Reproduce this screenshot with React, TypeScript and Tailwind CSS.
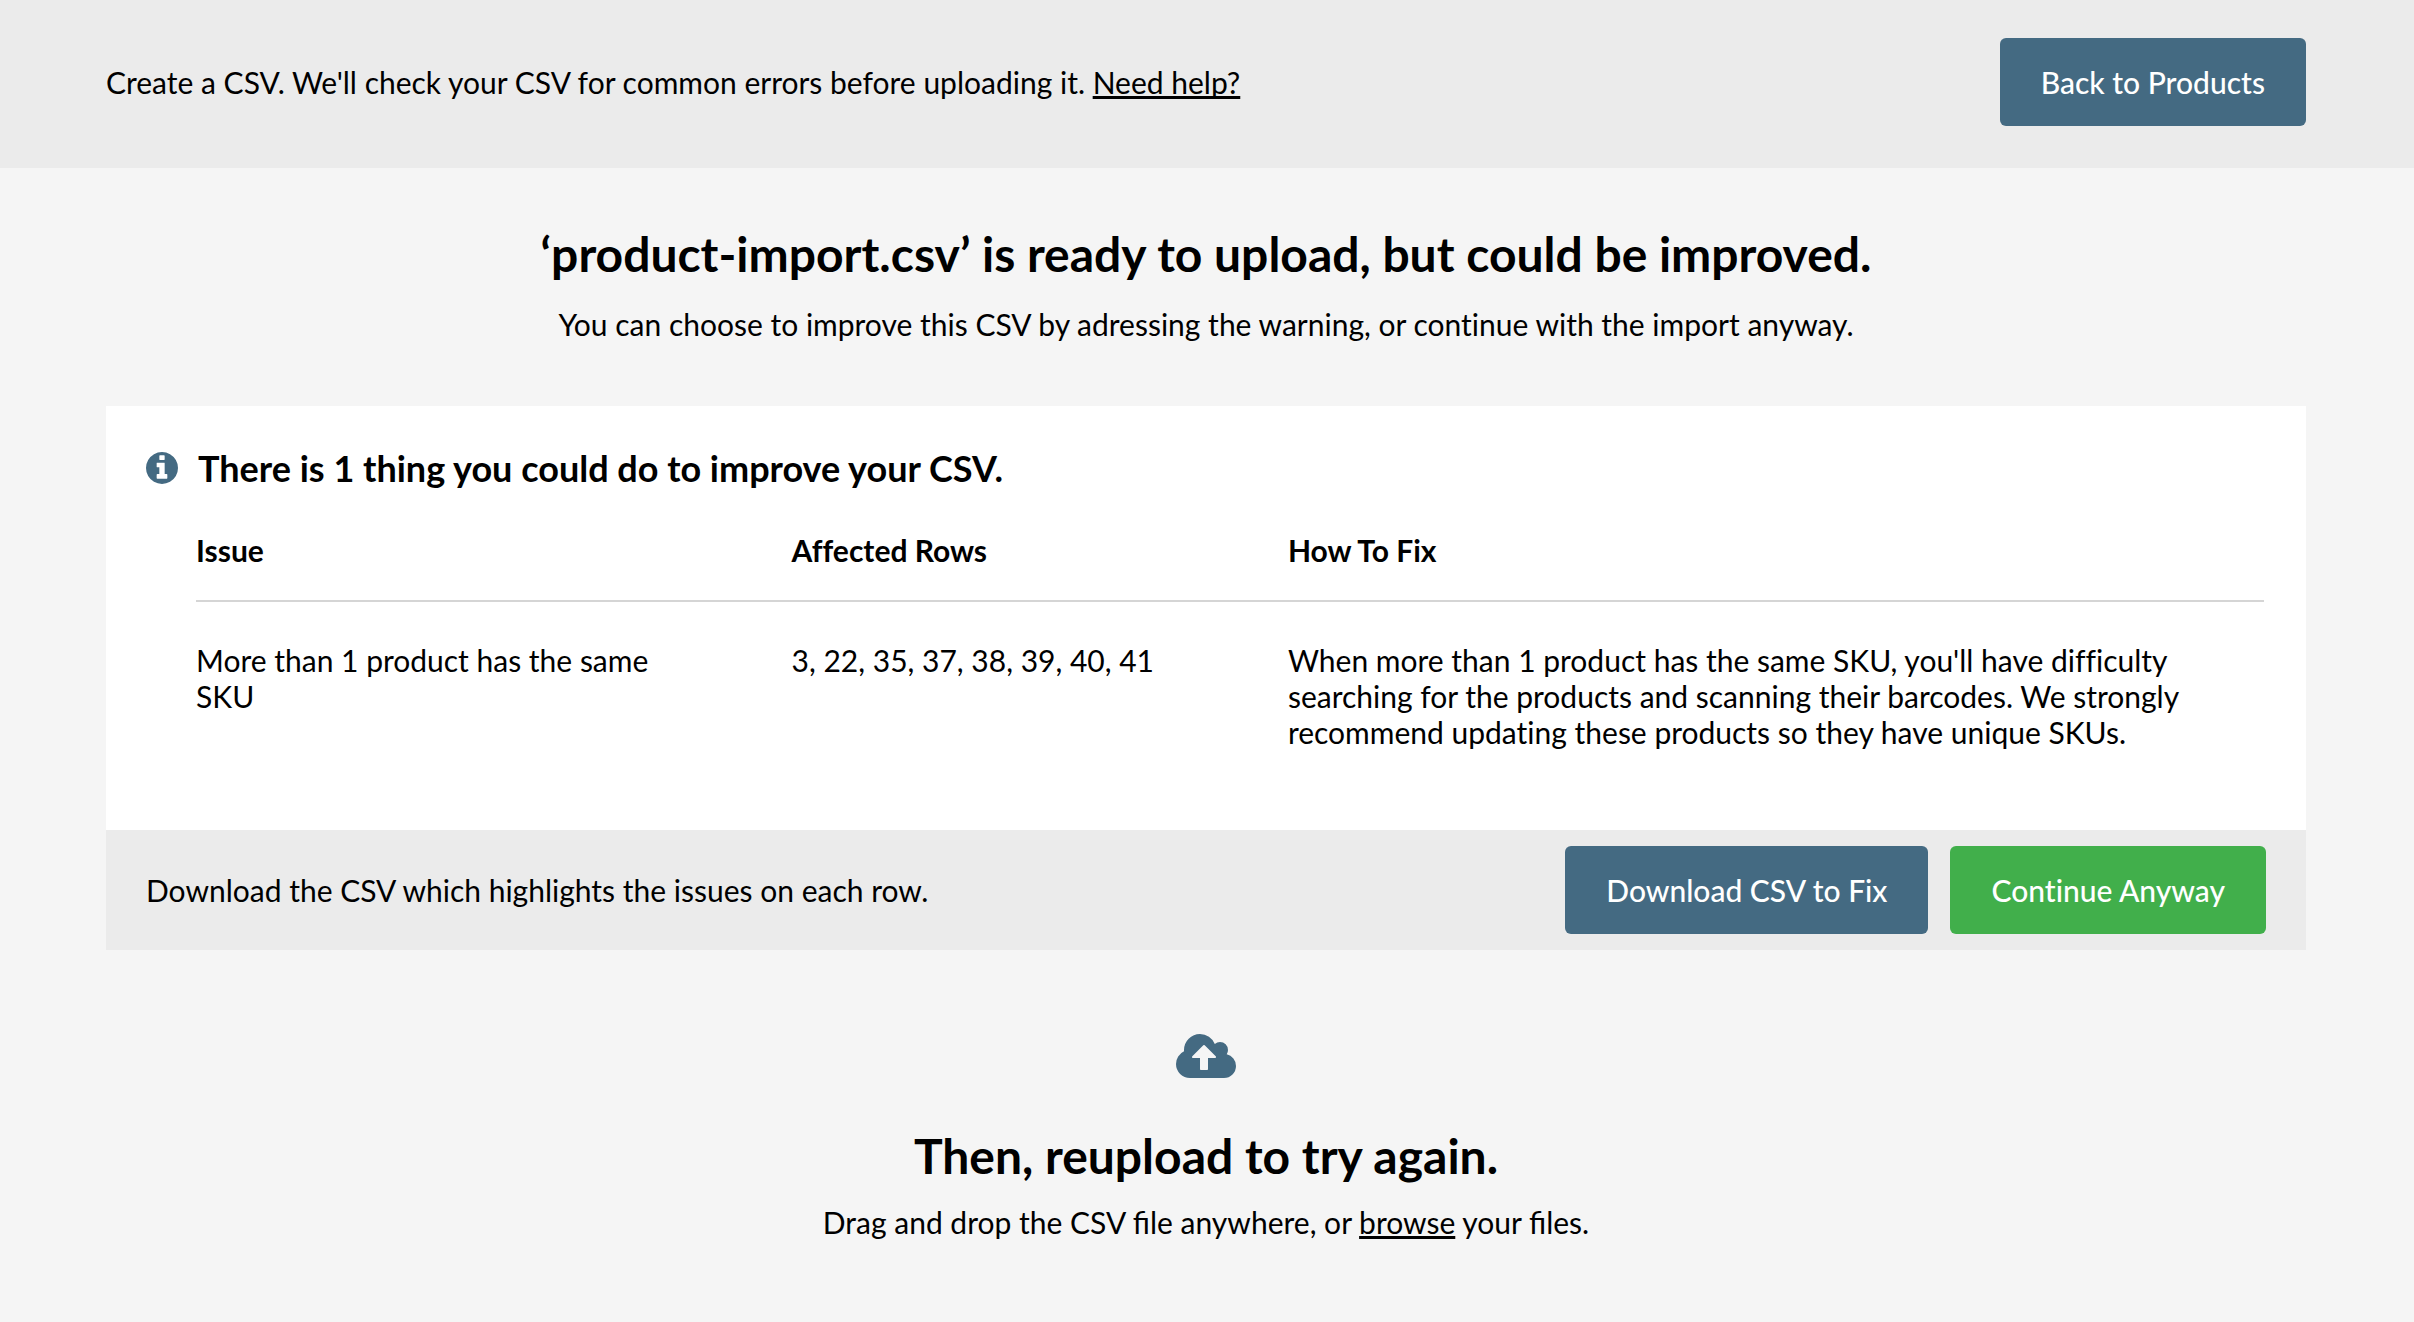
const button = "flex h-22 items-center rounded-md px-[41px] text-[30px] font-medium text-white";
const link = "underline [text-decoration-skip-ink:none]";

function InfoIcon() {
  return (
    <svg viewBox="128 128 1536 1536" className="size-8 shrink-0 fill-[#446a82]" aria-hidden="true">
      <path d="M1152 1376v-160q0-14-9-23t-23-9h-96v-512q0-14-9-23t-23-9h-320q-14 0-23 9t-9 23v160q0 14 9 23t23 9h96v320h-96q-14 0-23 9t-9 23v160q0 14 9 23t23 9h448q14 0 23-9t9-23zM1024 480v-160q0-14-9-23t-23-9h-192q-14 0-23 9t-9 23v160q0 14 9 23t23 9h192q14 0 23-9t9-23zM1664 896q0 209-103 385.5t-279.5 279.5-385.5 103-385.5-103-279.5-279.5-103-385.5 103-385.5 279.5-279.5 385.5-103 385.5 103 279.5 279.5 103 385.5z" />
    </svg>
  );
}

function CloudUploadIcon() {
  return (
    <svg viewBox="0 128 1920 1408" className="h-11 w-15 fill-[#446a82]" aria-hidden="true">
      <path d="M1280 864q0-14-9-23l-352-352q-9-9-23-9t-23 9l-351 351q-10 12-10 24 0 14 9 23t23 9h224v352q0 13 9.5 22.5t22.5 9.5h192q13 0 22.5-9.5t9.5-22.5v-352h224q13 0 22.5-9.5t9.5-22.5zM1920 1152q0 159-112.5 271.5t-271.5 112.5h-1088q-185 0-316.5-131.5t-131.5-316.5q0-130 70-240t188-165q-2-30-2-43 0-212 150-362t362-150q156 0 285.5 87t188.5 231q71-62 166-62 106 0 181 75t75 181q0 76-41 138 130 31 213.5 135.5t83.5 238.5z" />
    </svg>
  );
}

export default function App() {
  return (
    <div className="min-h-screen bg-[#f5f5f5] font-['Lato',sans-serif] text-[30px] leading-9 text-black [font-variant-ligatures:none]">
      <header className="flex items-center justify-between bg-[#ebebeb] pt-[38px] pr-27 pb-[42px] pl-[106px]">
        <p>
          Create a CSV. We'll check your CSV for common errors before uploading it.{" "}
          <a href="#help" className={link}>Need help?</a>
        </p>
        <button className={button + " bg-[#446a82]"}>Back to Products</button>
      </header>
      <main className="pr-27 pl-[106px] pb-15">
        <div className="pt-[54px] text-center">
          <h1 className="text-[48px] leading-16 font-bold">‘product-import.csv’ is ready to upload, but could be improved.</h1>
          <p className="mt-5">You can choose to improve this CSV by adressing the warning, or continue with the import anyway.</p>
        </div>
        <section className="mt-16 bg-white">
          <div className="pt-10 pr-[42px] pb-20 pl-10">
            <div className="flex items-center gap-5">
              <InfoIcon />
              <h2 className="text-[36px] leading-11 font-bold">There is 1 thing you could do to improve your CSV.</h2>
            </div>
            <table className="mt-[26px] ml-[50px] w-[calc(100%-50px)] table-fixed text-left">
              <thead>
                <tr className="border-b-2 border-[#d5d5d5]">
                  <th className="w-[28.8%] pt-4 pb-8 font-bold">Issue</th>
                  <th className="w-[24%] pt-4 pb-8 font-bold">Affected Rows</th>
                  <th className="pt-4 pb-8 font-bold">How To Fix</th>
                </tr>
              </thead>
              <tbody>
                <tr className="align-top">
                  <td className="pt-10 pr-32">More than 1 product has the same SKU</td>
                  <td className="pt-10">3, 22, 35, 37, 38, 39, 40, 41</td>
                  <td className="pt-10 pr-20">When more than 1 product has the same SKU, you'll have difficulty searching for the products and scanning their barcodes. We strongly recommend updating these products so they have unique SKUs.</td>
                </tr>
              </tbody>
            </table>
          </div>
          <div className="flex h-30 items-center justify-between bg-[#ebebeb] px-10">
            <p>Download the CSV which highlights the issues on each row.</p>
            <div className="flex gap-[22px]">
              <button className={button + " bg-[#446a82]"}>Download CSV to Fix</button>
              <button className={button + " bg-[#41af4b]"}>Continue Anyway</button>
            </div>
          </div>
        </section>
        <section className="flex flex-col items-center pt-21 text-center">
          <CloudUploadIcon />
          <h2 className="mt-[46px] text-[48px] leading-16 font-bold">Then, reupload to try again.</h2>
          <p className="mt-4 [font-variant-ligatures:normal]">Drag and drop the CSV file anywhere, or <a href="#browse" className={link}>browse</a> your files.</p>
        </section>
      </main>
    </div>
  );
}
